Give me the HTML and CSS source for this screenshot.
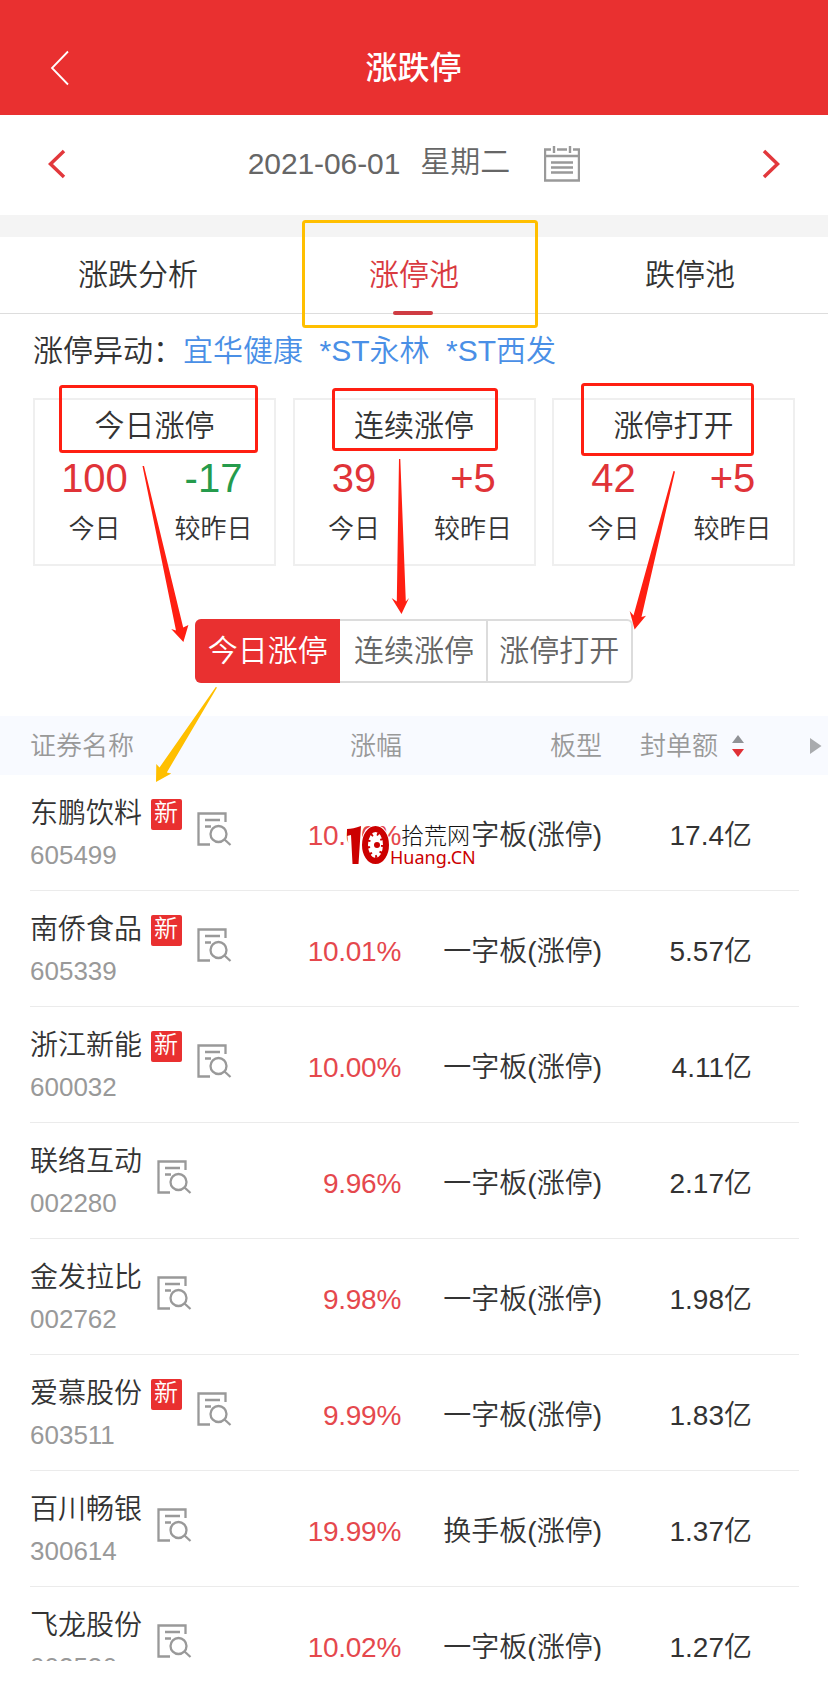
FILE: index.html
```
<!DOCTYPE html>
<html lang="zh-CN">
    <head>
        <meta charset="utf-8">
        <meta name="viewport" content="width=device-width, initial-scale=1">
        <title>涨跌停</title>
        <link rel="stylesheet" href="styles.css">
    </head>
    <body>
        <svg class="sprite">
            <symbol id="icon-detail" viewBox="0 0 36 36">
                <path d="M14 33.5H2.5V2.5H29.5V11M9 9H24M9 15.5H15"/>
                <circle cx="22.5" cy="23" r="8"/>
                <path d="M28.5 28.5L34.5 34"/>
            </symbol>
        </svg>

        <div id="principal">
            <header class="header">
                <svg class="header-back" width="20" height="36" viewBox="0 0 20 36"><path d="M18 1.5L2 18L18 34.5"/></svg>
                <h1 class="header-title">涨跌停</h1>
            </header>

            <div class="date-bar">
                <svg class="arrow" width="18" height="30" viewBox="0 0 18 30"><path d="M16 2L2.500 15L16 28"/></svg>
                <div class="date">
                    <span class="day">2021-06-01</span>
                    <span class="weekday">星期二</span>
                    <svg class="calendar" width="36" height="36" viewBox="0 0 36 36">
                        <path d="M7 3.500H1V34.500H35V3.500H29M13 3.500H23M1 10H35M10 0V7M26 0V7"/>
                        <path d="M7 16.500H29M7 21.500H29M7 26.500H29"/>
                    </svg>
                </div>
                <svg class="arrow" width="18" height="30" viewBox="0 0 18 30"><path d="M2 2L15.500 15L2 28"/></svg>
            </div>

            <nav class="tabs">
                <a class="tab">涨跌分析</a>
                <a class="tab active">涨停池</a>
                <a class="tab">跌停池</a>
            </nav>

            <div class="notice">涨停异动：<a>宜华健康</a><a>*ST永林</a><a>*ST西发</a></div>

            <div class="cards">
                <div class="card">
                    <h2>今日涨停</h2>
                    <div class="stats">
                        <div><b class="up">100</b><span>今日</span></div>
                        <div><b class="down">-17</b><span>较昨日</span></div>
                    </div>
                </div>
                <div class="card">
                    <h2>连续涨停</h2>
                    <div class="stats">
                        <div><b class="up">39</b><span>今日</span></div>
                        <div><b class="up">+5</b><span>较昨日</span></div>
                    </div>
                </div>
                <div class="card">
                    <h2>涨停打开</h2>
                    <div class="stats">
                        <div><b class="up">42</b><span>今日</span></div>
                        <div><b class="up">+5</b><span>较昨日</span></div>
                    </div>
                </div>
            </div>

            <div class="switch">
                <a class="selected">今日涨停</a>
                <a>连续涨停</a>
                <a>涨停打开</a>
            </div>

            <div class="table-head">
                <span>证券名称</span>
                <span class="rate">涨幅</span>
                <span class="type">板型</span>
                <span class="amount">封单额</span>
                <svg class="sort" width="12" height="22" viewBox="0 0 12 22"><path fill="#909296" d="M6 0L12 8H0z"/><path fill="#e03036" d="M0 14H12L6 22z"/></svg>
                <svg class="more" width="12" height="16" viewBox="0 0 12 16"><path fill="#a9abae" d="M0 0L11.500 8L0 16z"/></svg>
            </div>

            <div class="list">
                <div class="row">
                    <div class="stock"><span class="name">东鹏饮料</span><span class="code">605499</span></div>
                    <i class="new">新</i>
                    <svg class="detail"><use href="#icon-detail"/></svg>
                    <span class="rate">10.00%</span>
                    <span class="type">一字板(涨停)</span>
                    <span class="amount">17.4亿</span>
                </div>
                <div class="row">
                    <div class="stock"><span class="name">南侨食品</span><span class="code">605339</span></div>
                    <i class="new">新</i>
                    <svg class="detail"><use href="#icon-detail"/></svg>
                    <span class="rate">10.01%</span>
                    <span class="type">一字板(涨停)</span>
                    <span class="amount">5.57亿</span>
                </div>
                <div class="row">
                    <div class="stock"><span class="name">浙江新能</span><span class="code">600032</span></div>
                    <i class="new">新</i>
                    <svg class="detail"><use href="#icon-detail"/></svg>
                    <span class="rate">10.00%</span>
                    <span class="type">一字板(涨停)</span>
                    <span class="amount">4.11亿</span>
                </div>
                <div class="row">
                    <div class="stock"><span class="name">联络互动</span><span class="code">002280</span></div>
                    <svg class="detail"><use href="#icon-detail"/></svg>
                    <span class="rate">9.96%</span>
                    <span class="type">一字板(涨停)</span>
                    <span class="amount">2.17亿</span>
                </div>
                <div class="row">
                    <div class="stock"><span class="name">金发拉比</span><span class="code">002762</span></div>
                    <svg class="detail"><use href="#icon-detail"/></svg>
                    <span class="rate">9.98%</span>
                    <span class="type">一字板(涨停)</span>
                    <span class="amount">1.98亿</span>
                </div>
                <div class="row">
                    <div class="stock"><span class="name">爱慕股份</span><span class="code">603511</span></div>
                    <i class="new">新</i>
                    <svg class="detail"><use href="#icon-detail"/></svg>
                    <span class="rate">9.99%</span>
                    <span class="type">一字板(涨停)</span>
                    <span class="amount">1.83亿</span>
                </div>
                <div class="row">
                    <div class="stock"><span class="name">百川畅银</span><span class="code">300614</span></div>
                    <svg class="detail"><use href="#icon-detail"/></svg>
                    <span class="rate">19.99%</span>
                    <span class="type">换手板(涨停)</span>
                    <span class="amount">1.37亿</span>
                </div>
                <div class="row">
                    <div class="stock"><span class="name">飞龙股份</span><span class="code">002536</span></div>
                    <svg class="detail"><use href="#icon-detail"/></svg>
                    <span class="rate">10.02%</span>
                    <span class="type">一字板(涨停)</span>
                    <span class="amount">1.27亿</span>
                </div>
            </div><!-- the end list -->

            <!-- watermark -->
            <div class="watermark">
                <svg class="watermark-logo" width="44" height="40" viewBox="0 0 44 40">
                    <path class="halo" d="M2 2L15 1L13 38H6z"/>
                    <ellipse class="halo" cx="29.500" cy="20" rx="13" ry="18.500"/>
                    <path d="M1 4Q7 4 15 1L12.500 39H6.500L5 10L1 11z"/>
                    <ellipse class="ring" cx="29.500" cy="20" rx="10.500" ry="16"/>
                    <ellipse class="teeth" cx="29.500" cy="20" rx="7" ry="11.500"/>
                    <circle cx="31" cy="20" r="3"/>
                </svg>
                <div class="watermark-text">
                    <span class="watermark-name">拾荒网</span>
                    <span class="watermark-url">Huang.CN</span>
                </div>
            </div>

            <!-- marks over the page -->
            <svg class="marks" width="828" height="1692" viewBox="0 0 828 1692">
                <g class="box">
                    <rect class="yellow" x="303.500" y="221.500" width="233" height="105" rx="2"/>
                    <rect x="60.500" y="386.500" width="196" height="65" rx="2"/>
                    <rect x="333.500" y="389.500" width="163" height="60" rx="2"/>
                    <rect x="582.500" y="384.500" width="170" height="70" rx="2"/>
                </g>
                <g class="pointer">
                    <path d="M142.500 466L144 466L183.200 627.500L188.400 625L183.400 642L171.200 629L176 630.500z"/>
                    <path d="M399 459H400.300L405.800 601.500L409 598L401.500 614L391.600 598L396.800 601.500z"/>
                    <path d="M673.500 471L675 471.500L641.500 617L646 615.700L634.600 629.500L629.700 611L633.500 615.500z"/>
                    <path class="yellow" d="M215.800 687L217 687.500L166.800 772.500L171.300 773.500L156 782L156.300 764L159.500 767.500z"/>
                </g>
            </svg>
        </div><!-- the end principal -->
    </body>
</html>
```
FILE: styles.css
```
*{
    box-sizing: border-box;
    font-weight: 350;
}

body{
    margin: 0;
    background-color: #fff;
    color: #333;
    font-family: "Liberation Sans", "Noto Sans CJK SC", sans-serif;
    font-size: 30px;
}

h1, h2{
    margin: 0;
}

#principal{
    position: relative;
    width: 828px;
    height: 1692px;
    overflow: hidden;
}

.sprite{
    position: absolute;
    width: 0;
    height: 0;
}

.header{
    display: grid;
    grid-template-columns: 1fr auto 1fr;
    align-items: center;
    height: 115px;
    padding: 21px 51px 0 50px;
    background-color: #e93030;
    color: #fff;
}

.header-back{
    fill: none;
    stroke: #fff;
    stroke-width: 1.800;
}

.header-title{
    font-size: 32px;
    line-height: 42px;
    font-weight: 500;
}

.date-bar{
    display: flex;
    align-items: center;
    justify-content: space-between;
    height: 100px;
    padding: 0 48px 3px;
    color: #666;
}

.arrow{
    fill: none;
    stroke: #e2383c;
    stroke-width: 3.500;
}

.date{
    display: flex;
    align-items: center;
}

.day, .weekday{
    line-height: 36px;
}

.day{
    letter-spacing: -.1px;
}

.weekday{
    margin: 0 34px 0 20px;
    padding-bottom: 4px;
}

.calendar{
    fill: none;
    stroke: #999;
    stroke-width: 2.400;
}

.tabs{
    display: flex;
    height: 99px;
    border-top: 22px solid #f4f4f4;
    border-bottom: 1px solid #ddd;
}

.tab{
    position: relative;
    flex: 1;
    text-align: center;
    line-height: 76px;
}

.tab.active{
    color: #d93a40;
}

.tab.active::after{
    content: "";
    position: absolute;
    left: 117px;
    bottom: -2px;
    width: 40px;
    height: 4px;
    border-radius: 2px;
    background-color: #cf3c43;
}

.notice{
    height: 84px;
    padding-left: 33px;
    line-height: 74px;
}

.notice a{
    margin-right: 16.500px;
    color: #4a8fe6;
}

.cards{
    display: flex;
    justify-content: space-between;
    padding: 0 33px;
}

.card{
    width: 243px;
    height: 168px;
    border: 2px solid #efefef;
    text-align: center;
}

.card h2{
    font-size: 30px;
    line-height: 52px;
}

.stats{
    display: flex;
    padding-right: 1px;
}

.stats div{
    flex: 1;
}

.stats b, .stats span{
    display: block;
}

.stats b{
    font-size: 40px;
    line-height: 52px;
}

.stats span{
    padding-top: 2px;
    font-size: 26px;
    line-height: 46px;
}

.up{
    color: #e03338;
}

.down{
    color: #259b4c;
}

.switch{
    display: flex;
    width: 438px;
    height: 64px;
    margin: 53px auto 33px 195px;
    border: 2px solid #dcdcdc;
    border-radius: 6px;
    color: #666;
}

.switch a{
    width: 146px;
    border-left: 2px solid #dcdcdc;
    line-height: 60px;
    text-align: center;
}

.switch a:nth-child(2){
    border-left-color: #fff;
}

.switch .selected{
    margin: -2px 0 -2px -2px;
    border: 0;
    border-radius: 6px 0 0 6px;
    background-color: #e93030;
    line-height: 64px;
    color: #fff;
}

.table-head{
    display: flex;
    align-items: center;
    height: 59px;
    padding-left: 30px;
    background-color: #f8faff;
    color: #999;
    font-size: 26px;
}

.table-head span{
    padding-bottom: 4px;
}

.table-head .rate{
    margin-left: 216px;
}

.table-head .type{
    margin-left: 148px;
}

.table-head .amount{
    margin-left: 38px;
}

.sort{
    margin-left: 14px;
}

.more{
    margin-left: 66px;
}

.list{
    height: 886px;
    overflow: hidden;
}

.row{
    display: flex;
    height: 116px;
    margin: 0 29px 0 30px;
    border-bottom: 1px solid #ebebeb;
    font-size: 28px;
    line-height: 121px;
}

.name, .code{
    display: block;
}

.name{
    padding-top: 18px;
    line-height: 42px;
}

.code{
    color: #999;
    font-size: 26px;
    line-height: 40px;
}

.new{
    width: 31px;
    height: 31px;
    margin: 24px 0 0 9px;
    padding-left: 3px;
    border-radius: 2px;
    background-color: #e93030;
    color: #fff;
    font-size: 24px;
    font-style: normal;
    line-height: 28px;
}

.detail{
    width: 36px;
    height: 36px;
    margin: 36px 0 0 14px;
    fill: none;
    stroke: #999;
    stroke-width: 2.300;
}

.row .rate{
    margin-left: auto;
    color: #e5484d;
    letter-spacing: -.3px;
}

.row .type{
    width: 201px;
    text-align: right;
}

.row .amount{
    width: 150px;
    margin-right: 47px;
    text-align: right;
}

/* watermark and marks lie over the list */
.watermark{
    position: absolute;
    left: 346px;
    top: 825px;
    display: flex;
    color: #c00;
}

.watermark-logo{
    fill: #c00;
}

.watermark-logo .halo{
    fill: #fff;
    stroke: #fff;
    stroke-width: 3;
}

.watermark-logo .ring{
    fill: #fff;
    stroke: #c00;
    stroke-width: 6;
}

.watermark-logo .teeth{
    fill: none;
    stroke: #c00;
    stroke-width: 3;
    stroke-dasharray: 2 4.500;
}

.watermark-text span{
    display: block;
}

.watermark-name{
    width: 70px;
    margin-left: 11px;
    background-color: #fff;
    color: #111;
    font-size: 23px;
    font-weight: 300;
    line-height: 22px;
    white-space: nowrap;
}

.watermark-url{
    font-family: "Noto Sans", sans-serif;
    font-size: 18px;
    font-weight: 400;
    line-height: 20px;
}

.marks{
    position: absolute;
    left: 0;
    top: 0;
}

.box{
    fill: none;
    stroke: #ff1f12;
    stroke-width: 3;
}

.box .yellow{
    stroke: #ffbf00;
}

.pointer{
    fill: #ff1f12;
}

.pointer .yellow{
    fill: #ffbf00;
}
```
